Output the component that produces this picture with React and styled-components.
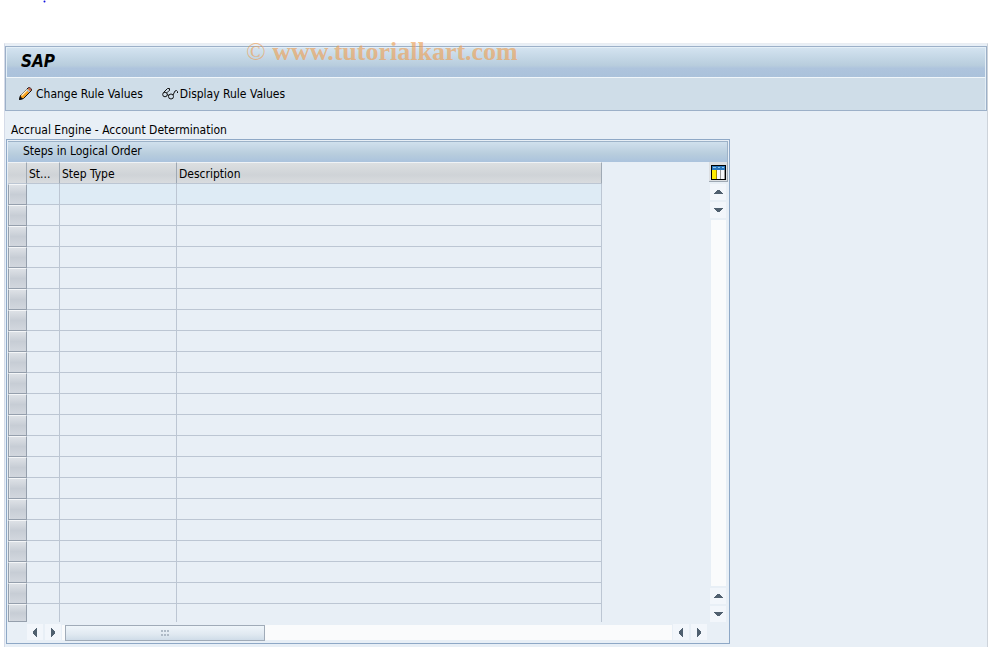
import React from 'react'
import styled, { createGlobalStyle } from 'styled-components'

const GlobalStyle = createGlobalStyle`
  * {
    box-sizing: border-box;
  }
  body {
    margin: 0;
    background: #fff;
    color: #000;
    font: 12px/16px 'DejaVu Sans Condensed', 'Noto Sans', sans-serif;
  }
`

const Page = styled.div`
  display: flex;
  flex-direction: column;
  min-height: 100vh;
  padding: 0 4px;
`

const TopBar = styled.header`
  height: 43px;
  padding-left: 39px;
  overflow: hidden;
`

const Dot = styled.svg`
  display: block;
`

const Window = styled.div`
  position: relative;
  flex: 1;
  padding-top: 2px;
  background: #e8eff6;
  border-left: 1px solid #d5dbe8;
  border-right: 1px solid #cdd3da;
  border-top: 1px solid #e9edf2;
`

const Frame = styled.div`
  border: 1px solid #9cb0c8;
`

const TitleBar = styled.div`
  height: 30px;
  padding: 5px 14px;
  border: 1px solid #e4eff7;
  border-bottom: 0;
  background: linear-gradient(#d3e3f0, #b8cddd 60%, #aec4dd 70%, #abc2db);
`

const Title = styled.h1`
  margin: 0;
  font: italic bold 17px/16px 'DejaVu Sans Condensed', 'Noto Sans', sans-serif;
`

const Toolbar = styled.div`
  display: flex;
  align-items: center;
  gap: 19px;
  height: 33px;
  padding: 0 12px;
  background: #cfdde8;
  border-top: 1px solid #f0f6fa;
  border-right: 1px solid #e4eff7;
`

const ToolButton = styled.button`
  display: flex;
  align-items: center;
  gap: 2px;
  padding: 0;
  border: 0;
  background: none;
  font: inherit;
  color: inherit;
`

const Watermark = styled.div`
  position: absolute;
  top: -6px;
  left: 241px;
  font: bold 26px/28px 'Liberation Serif', serif;
  color: rgba(237, 160, 84, 0.65);
  pointer-events: none;
`

const Copyright = styled.span`
  font-weight: normal;
`

const Heading = styled.h2`
  margin: 11px 0 1px 6px;
  font-size: 12px;
  font-weight: normal;
  line-height: 16px;
`

const Panel = styled.section`
  width: 74%;
  max-width: 724px;
  margin-left: 1px;
  border: 1px solid #8ea8c6;
  padding: 1px;
`

const PanelTitle = styled.h3`
  margin: 0;
  padding: 1px 15px;
  height: 21px;
  font-size: 12px;
  font-weight: normal;
  line-height: 16px;
  border-top: 1px solid #9cb2c8;
  border-right: 1px solid #9cb2c8;
  background: linear-gradient(#d0e0ed, #b8cddd 60%, #abc3dd);
`

const PanelBody = styled.div`
  display: flex;
  justify-content: space-between;
`

const Grid = styled.table`
  width: 594px;
  table-layout: fixed;
  border-collapse: separate;
  border-spacing: 0;
`

const HeadCell = styled.th`
  height: 22px;
  padding: 1px 2px 0;
  text-align: left;
  font-weight: normal;
  white-space: nowrap;
  border-top: 1px solid #f0f3f6;
  border-right: 1px solid #9fa9b4;
  border-bottom: 1px solid #bcc6d3;
  background: linear-gradient(#dcdfe1, #cfd3d7 60%, #d9dcdf);
`

const Cell = styled.td`
  height: 21px;
  padding: 0;
  border-right: 1px solid #bcc6d3;
  border-bottom: 1px solid #bcc6d3;
  background: ${props => props.$current ? '#deebf5' : '#e8eff6'};
  tr:last-child & {
    height: 18px;
    border-bottom: 0;
  }
`

const Selector = styled(Cell)`
  border: 1px solid #959fac;
  border-top-color: #f4f6f8;
  background: linear-gradient(#dde1e6, #c7cdd5 50%, #d2d7de);
  box-shadow: inset 1px 0 #e3e7eb;
  tr:last-child & {
    border-bottom: 1px solid #959fac;
  }
`

const SideBar = styled.div`
  display: flex;
  flex-direction: column;
  gap: 2px;
  width: 19px;
`

const ConfigButton = styled.button`
  width: 19px;
  height: 20px;
  padding: 3px 2px 1px;
  border: 0;
  border-right: 1px solid #9fa9b4;
  border-bottom: 1px solid #9fa9b4;
  background: #dcdfe2;
`

const ScrollButton = styled.button`
  display: flex;
  align-items: center;
  justify-content: center;
  flex: none;
  width: 16px;
  height: 16px;
  margin: 0 1px;
  padding: 0;
  border: 0;
  background: #f2f6fb;
`

const VerticalTrack = styled.div`
  flex: 1;
  width: 15px;
  margin-left: 2px;
  background: #fafbfc;
`

const BottomBar = styled.div`
  display: flex;
  align-items: center;
  height: 20px;
  padding: 0 20px 0 18px;
`

const HorizontalTrack = styled.div`
  flex: 1;
  height: 15px;
  padding-left: 3px;
  background: #fafbfc;
`

const Thumb = styled.div`
  display: flex;
  align-items: center;
  justify-content: center;
  width: 200px;
  height: 16px;
  border: 1px solid #a0abb8;
  background: linear-gradient(#eff5fa, #e0e9f1 60%, #cfdce8);
`

const Icon = styled.svg`
  display: block;
  flex: none;
`

const arrows = {
  up: 'M0 6h9v-1h-1v-1h-1v-1h-1v-1h-3v1h-1v1h-1v1h-1z',
  down: 'M0 2h9v1h-1v1h-1v1h-1v1h-3v-1h-1v-1h-1v-1h-1z',
  left: 'M6 0v9h-1v-1h-1v-1h-1v-1h-1v-3h1v-1h1v-1h1v-1z',
  right: 'M2 0v9h1v-1h1v-1h1v-1h1v-3h-1v-1h-1v-1h-1v-1z'
}

function Arrow({ direction }) {
  return (
    <ScrollButton aria-label={'Scroll ' + direction}>
      <Icon width="9" height="9"><path d={arrows[direction]} fill="#50606f" /></Icon>
    </ScrollButton>
  )
}

function PencilIcon() {
  return (
    <Icon width="16" height="16" viewBox="0 0 16 16">
      <path d="M1.500 13.500l1-4 7.500-7.500 1.500-.5 2 1.500v1.500l-8 8z" fill="#f5a01e" stroke="#111" />
      <path d="M3.500 9.500l6-6" stroke="#fff3d0" strokeWidth="1.400" />
      <path d="M10 2.500l1.500-1 2 2-1 1.500z" fill="#bd6060" />
      <path d="M9 3.500l2.500 2.500" stroke="#a9b9da" strokeWidth="1.500" />
      <path d="M1 14l1-4 3 3z" fill="#111" />
    </Icon>
  )
}

function GlassesIcon() {
  return (
    <Icon width="16" height="16" viewBox="0 0 16 16" fill="none" stroke="#111">
      <circle cx="3" cy="8.500" r="2.300" />
      <circle cx="9" cy="10.500" r="2.500" />
      <path d="M1.500 6.500l4-4h2v1.500M5 8.500l2 1M11 9l2-4 1.500-.5 1 1v1.500" />
      <path d="M4.500 7l3.500-3" strokeWidth=".8" />
    </Icon>
  )
}

function ColumnsIcon() {
  return (
    <Icon width="15" height="15" shapeRendering="crispEdges">
      <path fill="#000" d="M0 0h15v15h-15z" />
      <path fill="#2876bd" d="M1 1h13v4h-13z" />
      <path fill="#8fc7ed" d="M2 2h3v1h-3zM7 2h2v1h-2zM11 2h2v1h-2z" />
      <path fill="#ffec00" d="M1 5h4v9h-4z" />
      <path fill="#a58b00" d="M5 5h1v9h-1z" />
      <path fill="#f6f7fa" d="M6 5h3v9h-3zM10 5h3v9h-3z" />
      <path fill="#999" d="M9 5h1v9h-1zM13 5h1v9h-1z" />
    </Icon>
  )
}

const rows = Array.from({ length: 21 }, (_, i) => i)

function App() {
  return (
    <Page>
      <GlobalStyle />
      <TopBar>
        <Dot width="4" height="4"><circle cx="1.500" cy="1.500" r="1" fill="#1010e0" /></Dot>
      </TopBar>
      <Window>
        <Frame>
          <TitleBar><Title>SAP</Title></TitleBar>
          <Toolbar>
            <ToolButton><PencilIcon />Change Rule Values</ToolButton>
            <ToolButton><GlassesIcon />Display Rule Values</ToolButton>
          </Toolbar>
        </Frame>
        <Watermark><Copyright>©</Copyright> www.tutorialkart.com</Watermark>
        <Heading>Accrual Engine - Account Determination</Heading>
        <Panel>
          <PanelTitle>Steps in Logical Order</PanelTitle>
          <PanelBody>
            <Grid>
              <colgroup>
                <col width="19" />
                <col width="33" />
                <col width="117" />
                <col />
              </colgroup>
              <thead>
                <tr>
                  <HeadCell />
                  <HeadCell>St...</HeadCell>
                  <HeadCell>Step Type</HeadCell>
                  <HeadCell>Description</HeadCell>
                </tr>
              </thead>
              <tbody>
                {rows.map(row => (
                  <tr key={row}>
                    <Selector />
                    <Cell $current={row === 0} />
                    <Cell $current={row === 0} />
                    <Cell $current={row === 0} />
                  </tr>
                ))}
              </tbody>
            </Grid>
            <SideBar>
              <ConfigButton aria-label="Configure columns"><ColumnsIcon /></ConfigButton>
              <Arrow direction="up" />
              <Arrow direction="down" />
              <VerticalTrack />
              <Arrow direction="up" />
              <Arrow direction="down" />
            </SideBar>
          </PanelBody>
          <BottomBar>
            <Arrow direction="left" />
            <Arrow direction="right" />
            <HorizontalTrack>
              <Thumb>
                <Icon width="8" height="6"><path d="M0 0h2v2h-2zM3 0h2v2h-2zM6 0h2v2h-2zM0 4h2v2h-2zM3 4h2v2h-2zM6 4h2v2h-2z" fill="#aebac6" /></Icon>
              </Thumb>
            </HorizontalTrack>
            <Arrow direction="left" />
            <Arrow direction="right" />
          </BottomBar>
        </Panel>
      </Window>
    </Page>
  )
}

export default App
